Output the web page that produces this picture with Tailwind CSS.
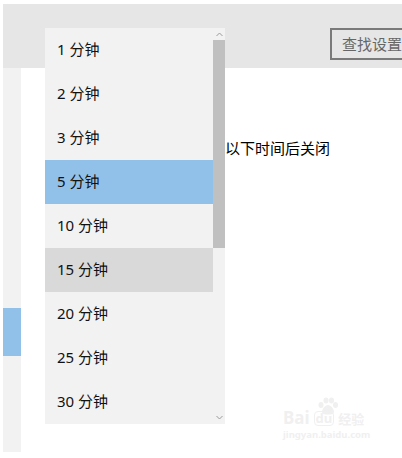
<!DOCTYPE html>
<html lang="zh-CN">
<head>
  <meta charset="UTF-8">
  <title>设置</title>
  <script src="https://cdn.jsdelivr.net/npm/@tailwindcss/browser@4"></script>
</head>
<body class="bg-white text-black font-['Noto_Sans','Noto_Sans_CJK_SC',sans-serif]">
  <div class="relative w-[402px] h-[458px] overflow-hidden pt-1 pl-[3px]">
    <!-- Header -->
    <div class="h-16 bg-[#e6e6e6] flex items-start justify-end pt-6">
      <div class="w-[72px] h-8 border-2 border-r-0 border-[#7a7a7a] pl-2.5 text-[15px] leading-7 text-[#666] whitespace-nowrap overflow-hidden">查找设置</div>
    </div>

    <div class="flex h-[384px]">
      <!-- Sidebar -->
      <div class="w-[18px] bg-[#f2f2f2] pt-[240px]">
        <div class="h-12 bg-[#91c1e8]"></div>
      </div>
      <!-- Content -->
      <div class="flex-1 pl-[204px] pt-[68px] text-[15px] leading-6 whitespace-nowrap">以下时间后关闭</div>
    </div>

    <!-- Dropdown -->
    <div class="absolute left-[45px] top-7 w-[180px] h-[396px] bg-[#f2f2f2] flex">
      <div class="w-[168px] text-[15px] text-[#111]">
        <div class="h-11 pl-3 pb-0.5 flex items-center">1 分钟</div>
        <div class="h-11 pl-3 pb-0.5 flex items-center">2 分钟</div>
        <div class="h-11 pl-3 pb-0.5 flex items-center">3 分钟</div>
        <div class="h-11 pl-3 pb-0.5 flex items-center bg-[#91c1e8]">5 分钟</div>
        <div class="h-11 pl-3 pb-0.5 flex items-center">10 分钟</div>
        <div class="h-11 pl-3 pb-0.5 flex items-center bg-[#d9d9d9]">15 分钟</div>
        <div class="h-11 pl-3 pb-0.5 flex items-center">20 分钟</div>
        <div class="h-11 pl-3 pb-0.5 flex items-center">25 分钟</div>
        <div class="h-11 pl-3 pb-0.5 flex items-center">30 分钟</div>
      </div>
      <!-- Scrollbar -->
      <div class="w-3 flex flex-col">
        <div class="h-3 flex items-center justify-center">
          <svg width="7" height="5" viewBox="0 0 7 5" fill="none" stroke="#9a9a9a"><path d="M.5 4 3.5 1l3 3"/></svg>
        </div>
        <div class="h-[208px] bg-[#c0c0c0]"></div>
        <div class="flex-1 flex items-end justify-center pb-1">
          <svg width="7" height="5" viewBox="0 0 7 5" fill="none" stroke="#9a9a9a"><path d="M.5 1l3 3 3-3"/></svg>
        </div>
      </div>
    </div>

    <!-- Watermark -->
    <div class="absolute left-[283px] top-[397px] w-[105px] text-[#f0f0f0] leading-none whitespace-nowrap">
      <svg class="absolute left-[34px] top-0" width="22" height="18" viewBox="0 0 22 18" fill="#f0f0f0">
        <ellipse cx="4" cy="8" rx="2.5" ry="3"/>
        <ellipse cx="9" cy="3.5" rx="2.5" ry="3"/>
        <ellipse cx="14.5" cy="3.5" rx="2.5" ry="3"/>
        <ellipse cx="18.5" cy="8" rx="2.5" ry="3"/>
        <path d="M11 8c-3 0-6 4-6 7 0 2 2 2.500 6 2.500s6-.5 6-2.500c0-3-3-7-6-7z"/>
      </svg>
      <div class="flex items-end gap-1 text-[17px] font-bold h-[29px]">
        <span>Bai</span><span class="border border-[#f0f0f0] rounded px-px text-[13px]">du</span><span class="text-[13px]">经验</span>
      </div>
      <div class="text-[9.5px] mt-1 font-bold">jingyan.baidu.com</div>
    </div>
  </div>
</body>
</html>
